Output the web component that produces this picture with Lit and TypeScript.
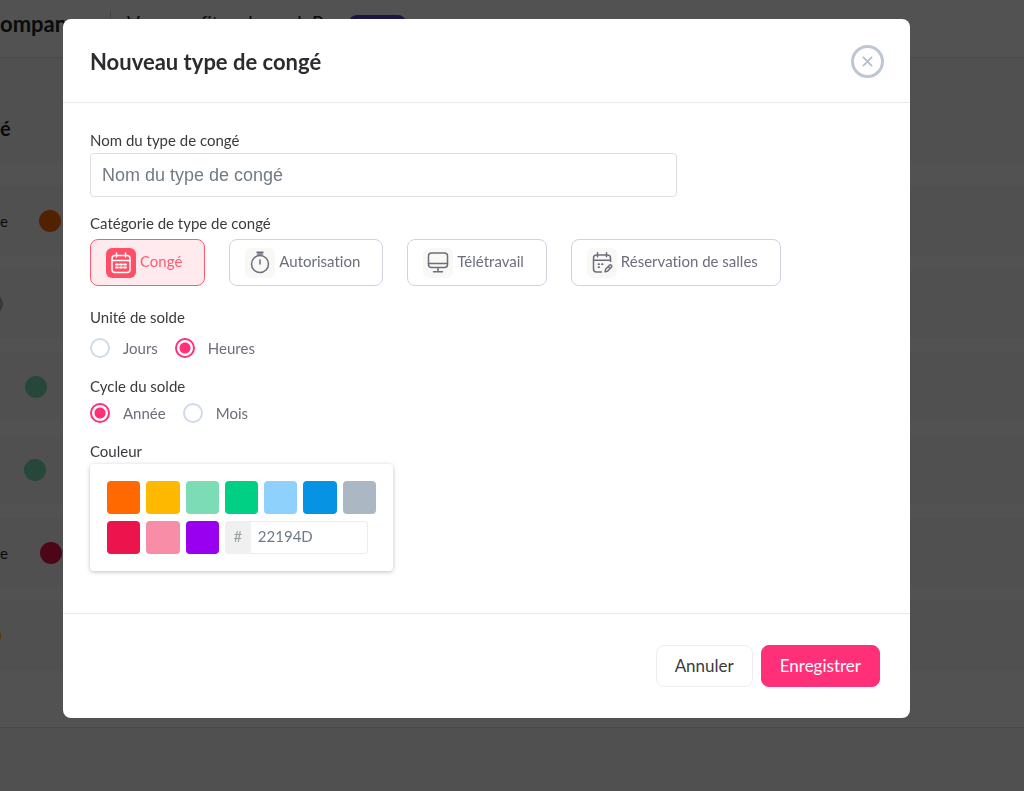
import { LitElement, html, svg, css } from "lit";
import { customElement, state } from "lit/decorators.js";

const calendarIcon = svg`
  <rect x="6" y="7.5" width="18" height="17" rx="3" />
  <path d="M6.5 12.5h17M10.5 5v4M19.5 5v4" />
  <path d="M10 16.5h2M14 16.5h2M18 16.5h2M10 19.5h2M14 19.5h2M18 19.5h2" stroke-width="2" />`;

const timerIcon = svg`
  <circle cx="15" cy="16" r="8.5" />
  <path d="M12 4.2h6M12.5 6h5M15 12v4" />`;

const screenIcon = svg`
  <rect x="5.5" y="5" width="19" height="14.5" rx="3" />
  <path d="M5.5 15.5h19M15 19.5v4M10.5 23.8h9" />`;

const bookingIcon = svg`
  <path d="M23.5 13.5V10a3 3 0 0 0-3-3h-11a3 3 0 0 0-3 3v11a3 3 0 0 0 3 3h5M6.5 12.3h17M10.5 4.8v4M19.5 4.8v4" />
  <path d="M11.500 16.200h.6M15 16.200h.6M11.500 19.200h.6" stroke-width="1.800" />
  <path d="M18 23.800l.6-2.600 3.800-4a1.300 1.300 0 0 1 2 2l-3.900 4zM21.200 18.600l1.800 1.700" />`;

const categories = [
  { label: "Congé", icon: calendarIcon },
  { label: "Autorisation", icon: timerIcon },
  { label: "Télétravail", icon: screenIcon },
  { label: "Réservation de salles", icon: bookingIcon },
];

const colors = [
  "#ff6900", "#fcb900", "#7bdcb5", "#00d084", "#8ed1fc",
  "#0693e3", "#abb8c3", "#eb144c", "#f78da7", "#9900ef",
];

const rows = [
  { name: "e", indent: 31, color: "#ff6900" },
  { name: "", indent: -19, color: "#abb8c3" },
  { name: "", indent: 25, color: "#7bdcb5" },
  { name: "", indent: 24, color: "#7bdcb5" },
  { name: "e", indent: 32, color: "#eb144c" },
  { name: "", indent: -21, color: "#fcb900" },
];

@customElement("leave-types-page")
class LeaveTypesPage extends LitElement {
  static styles = css`
    :host { display: block; background: #f9f9f9; color: #212529; }
    .top {
      display: flex; align-items: flex-start; height: 57px; overflow: hidden;
      background: #fff; border-bottom: 1px solid #e4e6ef; white-space: nowrap;
    }
    .company { width: 110px; font-size: 22px; font-weight: 700; line-height: 28px; padding-top: 10px; box-sizing: border-box; overflow: hidden; }
    .plan {
      display: flex; align-items: center; gap: 9px; height: 24px; margin-top: 11px;
      padding-left: 16px; border-left: 1px solid #ccd; font-size: 19px;
    }
    .badge { padding: 0 12px; border-radius: 8px; background: #5b3fd0; color: #fff; font-size: 12px; line-height: 16px; }
    .title { display: flex; align-items: center; height: 70px; padding-top: 35px; font-size: 20px; font-weight: 700; }
    .card {
      display: flex; flex-direction: column; gap: 14px; padding: 23px 0 57px;
      background: #fff; border-bottom: 1px solid #e4e6ef;
    }
    .row { display: flex; align-items: center; height: 69px; background: #f7f8fa; font-size: 15px; }
    .dot { width: 22px; height: 22px; border-radius: 50%; }
  `;

  render() {
    return html`
      <div class="top">
        <div class="company">ompany</div>
        <div class="plan"><span>Vous profitez du pack Pro</span><span class="badge">★ Pro</span></div>
      </div>
      <div class="title">é</div>
      <div class="card">
        ${rows.map(
          (r) => html`<div class="row">
            <span>${r.name}</span>
            <span class="dot" style="margin-left:${r.indent}px;background:${r.color}"></span>
          </div>`
        )}
      </div>
    `;
  }
}

@customElement("app-root")
class AppRoot extends LitElement {
  @state() private category = "Congé";

  static styles = css`
    :host {
      display: block; min-height: 100vh; background: #f9f9f9;
      font-family: Lato, "Liberation Sans", sans-serif; font-size: 15px; line-height: 20px; color: #3a3b3f;
      font-variant-ligatures: none;
    }
    * { box-sizing: border-box; }
    button, input { font: inherit; font-variant-ligatures: none; margin: 0; }
    button { cursor: pointer; }
    .overlay {
      position: fixed; inset: 0; overflow: auto;
      padding: 19px 114px 19px 63px; background: rgba(0, 0, 0, 0.68);
    }
    .modal { background: #fff; border-radius: 8px; }
    .header {
      display: flex; align-items: center; justify-content: space-between;
      padding: 26px 26px 24px 27px; border-bottom: 1px solid #e9eaee;
    }
    h1 { margin: 0; font-size: 22px; line-height: 28px; font-weight: 700; color: #2b2c30; }
    .close {
      display: grid; place-items: center; width: 33px; height: 33px; padding: 0;
      border: 3px solid #bfc6d3; border-radius: 50%; background: none; color: #b5bbc8;
    }
    .body { padding: 27px 27px 42px; }
    fieldset { border: 0; margin: 0; padding: 0; min-width: 0; }
    legend { padding: 0; }
    .label { display: block; line-height: 20px; }
    .name {
      display: block; width: 74%; height: 44px; margin: 3px 0 16px; padding: 0 11px;
      border: 1px solid #dcdfe8; border-radius: 4px; color: #495057;
      font-family: "Liberation Sans", Arial, sans-serif; font-size: 18px;
    }
    .name::placeholder { color: #727b84; opacity: 1; }
    .cards { display: flex; flex-wrap: wrap; gap: 24px; margin: 6px 0 21px; }
    .choice {
      display: flex; align-items: center; gap: 4px; height: 47px; padding: 0 22px 0 15px;
      border: 1px solid #d0d3df; border-radius: 8px; background: #fff; color: #6c6e7e;
    }
    .choice span { padding-bottom: 4px; }
    .choice svg {
      width: 30px; height: 30px; border-radius: 6px; background: #f8f8f5;
      fill: none; stroke: currentColor; stroke-width: 1.5; stroke-linecap: round; stroke-linejoin: round;
    }
    .choice.on { border-color: #ff5a72; background: #ffebee; color: #ff5a72; }
    .choice.on svg { background: #ff5068; stroke: #fff; }
    .radios { display: flex; gap: 17px; margin: 11px 0 18px; color: #6c6e7a; }
    .radios.tight { margin: 7px 0 18px; }
    .radios label { display: flex; align-items: center; gap: 13px; }
    .radios input {
      appearance: none; width: 20px; height: 20px; border: 2px solid #d1daea;
      border-radius: 50%; background: #fff;
    }
    .radios input:checked { border-color: #ff2f78; background: radial-gradient(circle, #ff2f78 5px, #fff 6px); }
    .picker {
      display: grid; grid-template-columns: repeat(7, 1fr); grid-auto-rows: 33px; gap: 7px 6px;
      width: 303px; margin-top: 3px; padding: 17px; border-radius: 4px;
      box-shadow: 0 1px 4px rgba(0, 0, 0, 0.25);
    }
    .swatch { padding: 0; border: 0; border-radius: 4px; }
    .hex { grid-column: span 4; display: flex; margin-right: 8px; }
    .hash {
      display: grid; place-items: center; width: 26px; border-radius: 4px 0 0 4px;
      background: #f0f0f0; color: #98a1a4;
    }
    .hex input {
      flex: 1; min-width: 0; padding: 0 7px; border: 1px solid #e9eeef; border-left: 0;
      border-radius: 0 4px 4px 0; color: #6d7b8a;
    }
    .hash, .hex input { padding-bottom: 3px; }
    .footer {
      display: flex; justify-content: flex-end; gap: 8px; padding: 31px 30px; border-top: 1px solid #e9eaee;
    }
    .btn {
      height: 42px; padding: 0 18px; border: 1px solid #ececf2; border-radius: 8px;
      background: #fff; color: #3a3b3f; font-size: 17px;
    }
    .btn.primary { border-color: #ff2f78; background: #ff2f78; color: #fff; }
  `;

  private choice(c: (typeof categories)[number]) {
    const on = c.label === this.category;
    return html`<button type="button" class="choice ${on ? "on" : ""}" aria-pressed=${on}
      @click=${() => (this.category = c.label)}>
      <svg viewBox="0 0 30 30" aria-hidden="true">${c.icon}</svg><span>${c.label}</span>
    </button>`;
  }

  private radio(group: string, label: string, checked: boolean) {
    return html`<label><input type="radio" name=${group} .checked=${checked} />${label}</label>`;
  }

  render() {
    return html`
      <leave-types-page></leave-types-page>
      <div class="overlay">
        <form class="modal" role="dialog" aria-labelledby="title" @submit=${(e: Event) => e.preventDefault()}>
          <div class="header">
            <h1 id="title">Nouveau type de congé</h1>
            <button type="button" class="close" aria-label="Fermer">
              <svg width="11" height="11" viewBox="0 0 12 12" fill="none" stroke="currentColor" stroke-width="1.8">
                <path d="M1 1l10 10M11 1L1 11" />
              </svg>
            </button>
          </div>
          <div class="body">
            <label class="label" for="name">Nom du type de congé</label>
            <input class="name" id="name" type="text" placeholder="Nom du type de congé" />
            <fieldset>
              <legend>Catégorie de type de congé</legend>
              <div class="cards">${categories.map((c) => this.choice(c))}</div>
            </fieldset>
            <fieldset>
              <legend>Unité de solde</legend>
              <div class="radios">${this.radio("unit", "Jours", false)}${this.radio("unit", "Heures", true)}</div>
            </fieldset>
            <fieldset>
              <legend>Cycle du solde</legend>
              <div class="radios tight">${this.radio("cycle", "Année", true)}${this.radio("cycle", "Mois", false)}</div>
            </fieldset>
            <label class="label" for="hex">Couleur</label>
            <div class="picker">
              ${colors.map(
                (c) => html`<button type="button" class="swatch" aria-label=${c} style="background:${c}"></button>`
              )}
              <div class="hex"><span class="hash">#</span><input id="hex" type="text" value="22194D" /></div>
            </div>
          </div>
          <div class="footer">
            <button type="button" class="btn">Annuler</button>
            <button type="submit" class="btn primary">Enregistrer</button>
          </div>
        </form>
      </div>
    `;
  }
}
